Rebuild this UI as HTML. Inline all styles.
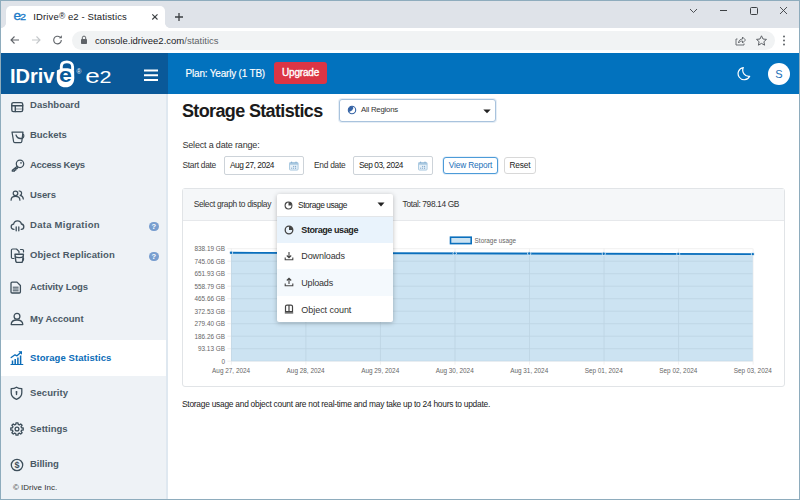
<!DOCTYPE html>
<html lang="en">
<head>
<meta charset="utf-8">
<title>IDrive e2 - Statistics</title>
<style>
*{box-sizing:border-box;margin:0;padding:0}
html,body{width:800px;height:500px;overflow:hidden;background:#fff}
body{font-family:"Liberation Sans",sans-serif;color:#222;position:relative;font-size:10px}
.abs{position:absolute}
#win{position:absolute;left:0;top:0;width:800px;height:500px;border:1px solid #8eacbd;overflow:hidden;background:#fff}
/* everything inside #inner is positioned in page coords */
#inner{position:absolute;left:-1px;top:-1px;width:800px;height:500px}
/* chrome */
#tabbar{left:0;top:0;width:800px;height:28px;background:#dfe3e9}
#tab{left:6px;top:6px;width:159px;height:22px;background:#fff;border-radius:5px 5px 0 0}
#tabtitle{left:33.300px;top:10.500px;font-size:9.5px;color:#202124;white-space:nowrap;letter-spacing:0.130px}
#toolbar{left:0;top:28px;width:800px;height:25px;background:#fff}
#omni{left:72px;top:31px;width:703px;height:18.500px;border-radius:9.500px;background:#f1f3f4}
#url{left:95px;top:35px;font-size:9.5px;color:#202124;white-space:nowrap}
#url span{color:#5f6368}
/* app header */
#hdrL{left:0;top:53px;width:168px;height:41px;background:#0a5999}
#hdrR{left:168px;top:53px;width:632px;height:41px;background:#0272be}
#plan{left:185.600px;top:67.500px;font-size:10px;color:#fff;white-space:nowrap;letter-spacing:-0.200px;-webkit-text-stroke:0.150px #fff}
#upg{left:273.700px;top:62.300px;width:53.700px;height:22.200px;border-radius:3px;background:#dc3545;color:#fff;font-size:10px;text-align:center;line-height:21.400px;letter-spacing:-0.200px;-webkit-text-stroke:0.350px #fff}
#avatar{left:767.800px;top:63px;width:22.200px;height:22.200px;border-radius:50%;background:#fff;color:#1a6fb8;text-align:center;line-height:22px;font-size:11px}
/* sidebar */
#side{left:0;top:94px;width:168px;height:406px;background:#eef2f6;border-right:2px solid #dfe8f0}
.nav{position:absolute;left:30px;font-size:9.5px;font-weight:bold;color:#4b5a66;white-space:nowrap}
.nav.act{color:#0a6cb8}
#actbg{left:0;top:340px;width:166px;height:36px;background:#fff}
.ico{position:absolute;left:10px;width:14px;height:14px}
.q{position:absolute;left:148.900px;width:9.800px;height:9.800px;border-radius:50%;background:#789ecf;color:#fff;font-size:7.500px;font-weight:bold;text-align:center;line-height:10px}
/* main */
#main{left:168px;top:94px;width:632px;height:406px;background:#fff}
#h1{left:182px;top:101px;font-size:18px;font-weight:bold;color:#1b1b1b;white-space:nowrap}
.box{position:absolute;background:#fff;border:1px solid #cdd3d9;border-radius:2px}
.t{position:absolute;white-space:nowrap}
</style>
</head>
<body>
<div id="win"><div id="inner">

<!-- Browser chrome -->
<div class="abs" id="tabbar"></div>
<div class="abs" id="tab"></div>
<div class="abs" style="left:1px;top:23px;width:5px;height:5px;background:radial-gradient(circle at 0 0,#dfe3e9 4.600px,#fff 5.200px)"></div>
<div class="abs" style="left:165px;top:23px;width:5px;height:5px;background:radial-gradient(circle at 100% 0,#dfe3e9 4.600px,#fff 5.200px)"></div>
<svg class="abs" style="left:13px;top:11px" width="16" height="11" viewBox="13 11 16 11" font-family="Liberation Sans, sans-serif" fill="#1a7ac8" stroke="#1a7ac8" stroke-width="0.300"><text transform="translate(13.400 19.500) scale(1.060 1)" font-size="12.800">e</text><text transform="translate(20.100 19.500) scale(1.100 1)" font-size="9.900">2</text></svg>
<div class="abs" id="tabtitle">IDrive<span style="font-size:8.500px;vertical-align:0.800px;letter-spacing:0">®</span> e2 - Statistics</div>
<svg class="abs" style="left:150.600px;top:13.100px" width="8" height="8" viewBox="0 0 8 8"><path d="M1.300 1.300 L6.500 6.500 M6.500 1.300 L1.300 6.500" stroke="#3c4043" stroke-width="1.1" fill="none"/></svg>
<svg class="abs" style="left:174.400px;top:12.100px" width="10" height="10" viewBox="0 0 10 10"><path d="M5 1 V9 M1 5 H9" stroke="#3c4043" stroke-width="1.3" fill="none"/></svg>
<!-- window controls -->
<svg class="abs" style="left:688px;top:5px" width="106" height="12" viewBox="0 0 106 12"><path d="M2 4 L5.5 7.5 L9 4" stroke="#3c4043" stroke-width="0.9" fill="none"/><path d="M32 5.5 H39" stroke="#3c4043" stroke-width="1"/><rect x="62.5" y="2.5" width="7" height="7" rx="1" fill="none" stroke="#3c4043" stroke-width="1"/><path d="M92 2 L99 9 M99 2 L92 9" stroke="#3c4043" stroke-width="0.9"/></svg>

<div class="abs" id="toolbar"></div>
<div class="abs" id="omni"></div>
<!-- nav icons -->
<svg class="abs" style="left:8px;top:33px" width="60" height="14" viewBox="0 0 60 14"><path d="M11 7 H3 M6.5 3.5 L3 7 L6.5 10.5" stroke="#5f6368" stroke-width="1.1" fill="none"/><path d="M24 7 H32 M28.500 3.500 L32 7 L28.500 10.500" stroke="#c4c7ca" stroke-width="1.1" fill="none"/><path d="M53.300 7 A3.800 3.800 0 1 1 52 4.200" stroke="#5f6368" stroke-width="1.1" fill="none"/><path d="M53.800 2.300 V5.300 H50.800 Z" fill="#5f6368"/></svg>
<svg class="abs" style="left:80px;top:35px" width="8" height="10" viewBox="0 0 8 10"><rect x="1" y="4" width="6" height="5" rx="0.8" fill="#5f6368"/><path d="M2.300 4 V2.800 A1.700 1.700 0 0 1 5.700 2.800 V4" stroke="#5f6368" stroke-width="1" fill="none"/></svg>
<div class="abs" id="url">console.idrivee2.com<span>/statitics</span></div>
<svg class="abs" style="left:734px;top:34px" width="40" height="13" viewBox="0 0 40 13"><path d="M3.500 5 H2 V11 H10 V9.500 M4.500 9 C4.500 6.500 6.500 5 8.500 5 V3 L11.500 6 L8.500 9 V7 C7 7 5.500 7.500 4.500 9 Z" stroke="#5f6368" stroke-width="0.9" fill="none" stroke-linejoin="round"/><path d="M27.500 1.800 L29 5 L32.500 5.400 L29.900 7.700 L30.600 11.200 L27.500 9.400 L24.400 11.200 L25.100 7.700 L22.500 5.400 L26 5 Z" stroke="#5f6368" stroke-width="1" fill="none" stroke-linejoin="round"/></svg>
<svg class="abs" style="left:782px;top:34px" width="4" height="13" viewBox="0 0 4 13"><circle cx="2" cy="2.500" r="1" fill="#5f6368"/><circle cx="2" cy="6.500" r="1" fill="#5f6368"/><circle cx="2" cy="10.500" r="1" fill="#5f6368"/></svg>

<!-- App header -->
<div class="abs" id="hdrL"></div>
<div class="abs" id="hdrR"></div>
<svg class="abs" style="left:0px;top:53px" width="130" height="41" viewBox="0 53 130 41" font-family="Liberation Sans, sans-serif">
<text x="10" y="82.700" font-size="20.200" font-weight="bold" fill="#fff" textLength="44.500" lengthAdjust="spacingAndGlyphs">IDriv</text>
<path d="M61.300 71 V66.800 C61.300 63.300 63.800 61.900 66.900 61.900 C70 61.900 72.600 63.500 72.600 66.800 V70.500" stroke="#fff" stroke-width="2.900" fill="none" stroke-linecap="butt"/>
<path d="M56.900 70.600 C59.500 68.900 62.500 68.300 65.500 68.300 C68.500 68.300 71.500 68.900 74.100 70.600 L74.300 78 C74.300 84 70.500 87.300 65.500 87.300 C60.400 87.300 56.700 84 56.700 78 Z" fill="#fff"/>
<text transform="translate(65.500 81.700) scale(1.180 1)" font-size="19.500" font-weight="bold" fill="#0a5999" text-anchor="middle">e</text>
<text x="79" y="73.900" font-size="6.600" fill="#fff" text-anchor="middle">®</text>
<text transform="translate(85.300 82.600) scale(1.260 1)" font-size="20.700" fill="#fff">e</text>
<text transform="translate(99.600 82.600) scale(1.330 1)" font-size="16.200" fill="#fff">2</text>
</svg>
<svg class="abs" style="left:144px;top:69px" width="14" height="13" viewBox="0 0 14 13"><path d="M0 1.600 H14 M0 6.250 H14 M0 10.900 H14" stroke="#fff" stroke-width="2"/></svg>
<div class="abs" id="plan">Plan: Yearly (1 TB)</div>
<div class="abs" id="upg">Upgrade</div>
<svg class="abs" style="left:737px;top:66px" width="14" height="15" viewBox="0 0 14 15"><path d="M6.300 1.600 A6.100 6.100 0 1 0 12.700 10.300 A6.200 6.200 0 0 1 6.300 1.600 Z" stroke="#fff" stroke-width="1.200" fill="none" stroke-linejoin="round"/></svg>
<div class="abs" id="avatar">S</div>

<!-- Sidebar -->
<div class="abs" id="side"></div>
<div class="abs" id="actbg"></div>
<div class="nav" style="top:98.6px;letter-spacing:0.019px">Dashboard</div>
<div class="nav" style="top:128.6px;letter-spacing:-0.024px">Buckets</div>
<div class="nav" style="top:158.5px;letter-spacing:-0.349px">Access Keys</div>
<div class="nav" style="top:188.5px;letter-spacing:-0.104px">Users</div>
<div class="nav" style="top:218.5px;letter-spacing:0.273px">Data Migration</div>
<div class="nav" style="top:248.5px;letter-spacing:0.077px">Object Replication</div>
<div class="nav" style="top:280.5px;letter-spacing:-0.135px">Activity Logs</div>
<div class="nav" style="top:313.3px;letter-spacing:0.012px">My Account</div>
<div class="nav act" style="top:351.8px;letter-spacing:0.064px">Storage Statistics</div>
<div class="nav" style="top:387.3px;letter-spacing:0.075px">Security</div>
<div class="nav" style="top:422.8px;letter-spacing:0.014px">Settings</div>
<div class="nav" style="top:458.4px;letter-spacing:-0.033px">Billing</div>
<div class="abs t" style="left:13px;top:482.800px;font-size:8px;color:#333">© IDrive Inc.</div>
<div class="q" style="top:221.600px">?</div>
<div class="q" style="top:251.700px">?</div>
<!--SIDEICONS-->
<svg class="abs" style="left:10px;top:101px" width="14" height="12" viewBox="0 0 14 12" fill="none" stroke="#3d4e5a" stroke-width="1.4" stroke-linecap="round" stroke-linejoin="round"><rect x="1.800" y="1.600" width="10.900" height="9" rx="1.600"/><path d="M1.800 4.700 H12.700 M5.300 4.700 V10.600" /><path d="M5.300 8 H12.700" stroke-width="0.600"/></svg>
<svg class="abs" style="left:11px;top:130px" width="14" height="14" viewBox="0 0 14 14" fill="none" stroke="#3d4e5a" stroke-width="1.25" stroke-linecap="round" stroke-linejoin="round"><path d="M1 2 H12 L10.800 11.500 C10.700 12.300 10.300 12.600 9.600 12.600 H3.800 C3.100 12.600 2.700 12.300 2.600 11.500 Z"/><path d="M5 5 C6 8 8 9 11.300 8.300 M11.700 4 C13.300 4.300 13.300 7.500 11.300 8.300"/></svg>
<svg class="abs" style="left:11px;top:159px" width="14" height="13" viewBox="0 0 14 13" fill="none" stroke="#3d4e5a" stroke-width="1.25" stroke-linecap="round" stroke-linejoin="round"><circle cx="9" cy="4.800" r="3.700"/><circle cx="10" cy="3.900" r="0.800" fill="#3d4e5a" stroke="none"/><path d="M6.300 7.300 L1.300 11.300 V12.200 H3.400 V11 H4.800 V9.700 H6 L7 8.300"/></svg>
<svg class="abs" style="left:10px;top:189px" width="15" height="13" viewBox="0 0 15 13" fill="none" stroke="#3d4e5a" stroke-width="1.25" stroke-linecap="round" stroke-linejoin="round"><circle cx="5.500" cy="4.300" r="2.300"/><path d="M1.100 11.200 C1.100 8.500 3 7.400 5.500 7.400 C8 7.400 9.900 8.500 9.900 11.200"/><path d="M9.200 2 C10.800 2.100 11.600 3.100 11.600 4.200 C11.600 5.200 11 6 10.200 6.400 C12 6.900 13.200 8 13.300 10"/></svg>
<svg class="abs" style="left:10px;top:219px" width="15" height="13" viewBox="0 0 15 13" fill="none" stroke="#3d4e5a" stroke-width="1.3" stroke-linecap="round" stroke-linejoin="round"><path d="M4 10.300 C2 10.300 1.200 9 1.200 7.700 C1.200 6.300 2.200 5.300 3.600 5.200 C4 3 5.600 1.800 7.500 1.800 C9.500 1.800 11 3 11.400 5 C13 5.200 13.800 6.300 13.800 7.700 C13.800 9.200 12.800 10.300 11.200 10.300"/><path d="M6.200 8 V11.800 M8.800 8 V11.800"/></svg>
<svg class="abs" style="left:10px;top:248px" width="15" height="15" viewBox="0 0 15 15" fill="none" stroke="#3d4e5a" stroke-width="1.2" stroke-linecap="round" stroke-linejoin="round"><path d="M4 10.500 H2.600 C1.800 10.500 1.400 10.100 1.400 9.300 V2.200 C1.400 1.400 1.800 1 2.600 1 H6.500 L9 3.500 V5"/><path d="M10.500 1.500 H12.500 C13.200 1.500 13.500 1.800 13.500 2.500 V4 M13.500 10 V11.500 C13.500 12.200 13.200 12.500 12.500 12.500"/><path d="M5 6.300 H13.400 L12.600 13.200 C12.500 14 12.100 14.400 11.300 14.400 H7.100 C6.300 14.400 5.900 14 5.800 13.200 Z" stroke-width="1.400"/><path d="M5.300 8.800 C7 10 11.400 10 13.100 8.800"/></svg>
<svg class="abs" style="left:10px;top:281px" width="12" height="13" viewBox="0 0 12 13" fill="none" stroke="#3d4e5a" stroke-width="1.3" stroke-linecap="round" stroke-linejoin="round"><path d="M1 2.200 C1 1.500 1.400 1.100 2.100 1.100 H7 L10.400 4.500 V10.900 C10.400 11.600 10 12 9.300 12 H2.100 C1.400 12 1 11.600 1 10.900 Z"/><path d="M3.200 6.200 H8.200 M3.200 8 H8.200 M3.200 9.800 H8.200" stroke-width="1"/></svg>
<svg class="abs" style="left:10px;top:312px" width="14" height="14" viewBox="0 0 14 14" fill="none" stroke="#3d4e5a" stroke-width="1.3" stroke-linecap="round" stroke-linejoin="round"><circle cx="7" cy="4.200" r="2.900"/><path d="M1.200 12.600 C1.200 9.500 3.500 8 7 8 C10.500 8 12.800 9.500 12.800 12.600 Z"/></svg>
<svg class="abs" style="left:10px;top:350px" width="14" height="16" viewBox="0 0 14 16" fill="none" stroke="#0a6cb8" stroke-width="1.25" stroke-linecap="round" stroke-linejoin="round"><path d="M1 14.500 H12.800" stroke-width="1.200"/><path d="M2.500 14 V10.500 M5.200 14 V9 M7.900 14 V7.500 M10.600 14 V5.500" stroke-width="1.500" stroke-linecap="butt"/><path d="M1.200 7.500 L5 4.800 L7 5.800 L11 2.200" stroke-width="1.300"/><path d="M8.300 1.200 H12 V4.800 Z" fill="#0a6cb8" stroke="none"/></svg>
<svg class="abs" style="left:10px;top:386px" width="14" height="15" viewBox="0 0 14 15" fill="none" stroke="#3d4e5a" stroke-width="1.3" stroke-linecap="round" stroke-linejoin="round"><path d="M6.500 1.200 C8 2.200 10 2.600 11.800 2.600 V6.800 C11.800 10 9.500 12.200 6.500 13.300 C3.500 12.200 1.200 10 1.200 6.800 V2.600 C3 2.600 5 2.200 6.500 1.200 Z"/><circle cx="6.500" cy="5.800" r="0.900" fill="#3d4e5a" stroke="none"/><path d="M6.500 6 V8.600" stroke-width="1.400"/></svg>
<svg class="abs" style="left:9.500px;top:421.900px" width="14" height="14" viewBox="0 0 14 14" fill="none" stroke="#3d4e5a" stroke-width="1.300" stroke-linecap="round" stroke-linejoin="round"><path d="M11.54 5.78 L13.22 6.01 L13.22 7.99 L11.54 8.22 L11.07 9.35 L12.10 10.70 L10.70 12.10 L9.35 11.07 L8.22 11.54 L7.99 13.22 L6.01 13.22 L5.78 11.54 L4.65 11.07 L3.30 12.10 L1.90 10.70 L2.93 9.35 L2.46 8.22 L0.78 7.99 L0.78 6.01 L2.46 5.78 L2.93 4.65 L1.90 3.30 L3.30 1.90 L4.65 2.93 L5.78 2.46 L6.01 0.78 L7.99 0.78 L8.22 2.46 L9.35 2.93 L10.70 1.90 L12.10 3.30 L11.07 4.65 Z"/><circle cx="7" cy="7" r="1.900"/></svg>
<svg class="abs" style="left:10px;top:457.5px" width="14" height="14" viewBox="0 0 14 14" fill="none" stroke="#3d4e5a" stroke-width="1.3" stroke-linecap="round" stroke-linejoin="round"><circle cx="7" cy="7" r="5.700"/><text x="7" y="10.200" font-family="Liberation Sans, sans-serif" font-size="9" font-weight="bold" text-anchor="middle" fill="#3d4e5a" stroke="none">$</text></svg>
<!--SIDEICONSEND-->

<!-- Main -->
<div class="abs" id="main"></div>
<div class="abs" id="h1" style="left:182px;letter-spacing:-0.642px">Storage Statistics</div>

<div class="box" style="left:339px;top:99px;width:157px;height:23px;border-color:#a9c3dd;border-radius:3px;box-shadow:0 0 0 1px #e6eef6"></div>
<svg class="abs" style="left:346.500px;top:105px" width="10" height="10" viewBox="0 0 10 10"><circle cx="5" cy="5" r="3.700" fill="none" stroke="#3563a5" stroke-width="1.100"/><path d="M5 1.300 C3 1.300 1.300 3 1.300 5 C1.300 5.800 1.600 6.500 2 7.100 L3.600 6.300 L5.200 5.200 L6.300 3.300 L5.800 1.400 Z" fill="#3563a5"/></svg>
<div class="t" style="left:361px;top:105px;font-size:7.800px;color:#333;letter-spacing:-0.222px">All Regions</div>
<svg class="abs" style="left:483.300px;top:108.500px" width="8" height="5" viewBox="0 0 8 5"><path d="M0.300 0.500 H7.700 L4 4.200 Z" fill="#222"/></svg>

<div class="t" style="left:182.4px;top:140px;font-size:9px;color:#333;letter-spacing:-0.173px">Select a date range:</div>
<div class="t" style="left:182.4px;top:160px;font-size:8.400px;color:#333;letter-spacing:-0.273px">Start date</div>
<div class="box" style="left:224px;top:156px;width:80px;height:19px"></div>
<div class="t" style="left:230px;top:160px;font-size:8.300px;color:#1a1a1a;letter-spacing:-0.448px">Aug 27, 2024</div>
<svg class="abs cal" style="left:289.4px;top:160.500px" width="10" height="10" viewBox="0 0 10 10"><rect x="0.500" y="1.500" width="8.600" height="7.600" rx="1" fill="#e6f0f8" stroke="#a6c6df" stroke-width="0.900"/><rect x="0.500" y="1.500" width="8.600" height="2.200" fill="#a6c6df"/><path d="M2.600 0.600 V2 M7 0.600 V2" stroke="#7fa9cc" stroke-width="0.900"/><path d="M4.200 5.400 H8 M2.200 7.200 H8" stroke="#6f9cc4" stroke-width="1" stroke-dasharray="1 0.900"/></svg>
<div class="t" style="left:314px;top:160px;font-size:8.400px;color:#333;letter-spacing:-0.254px">End date</div>
<div class="box" style="left:353px;top:156px;width:80px;height:19px"></div>
<div class="t" style="left:359px;top:160px;font-size:8.300px;color:#1a1a1a;letter-spacing:-0.448px">Sep 03, 2024</div>
<svg class="abs cal" style="left:418.4px;top:160.500px" width="10" height="10" viewBox="0 0 10 10"><rect x="0.500" y="1.500" width="8.600" height="7.600" rx="1" fill="#e6f0f8" stroke="#a6c6df" stroke-width="0.900"/><rect x="0.500" y="1.500" width="8.600" height="2.200" fill="#a6c6df"/><path d="M2.600 0.600 V2 M7 0.600 V2" stroke="#7fa9cc" stroke-width="0.900"/><path d="M4.200 5.400 H8 M2.200 7.200 H8" stroke="#6f9cc4" stroke-width="1" stroke-dasharray="1 0.900"/></svg>
<div class="box" style="left:443px;top:157px;width:55px;height:17px;border-color:#4d9bd8;border-radius:3px;box-shadow:0 0 0 0.600px #cfe3f5"></div>
<div class="t" style="left:443px;top:160.200px;width:55px;text-align:center;font-size:8.300px;color:#1a6fb8;letter-spacing:-0.150px">View Report</div>
<div class="box" style="left:504px;top:157px;width:32px;height:17px;border-color:#d8d8d8;border-radius:3px"></div>
<div class="t" style="left:504px;top:160.200px;width:32px;text-align:center;font-size:8.300px;color:#222;letter-spacing:-0.150px">Reset</div>

<!-- Panel -->
<div class="box" style="left:182px;top:188px;width:603px;height:199px;border-color:#e1e4e7;border-radius:3px"></div>
<div class="abs" style="left:183px;top:189px;width:601px;height:32.300px;background:#f5f7f9;border-bottom:1.300px solid #e6e8eb"></div>
<div class="t" style="left:193.7px;top:199px;font-size:8.400px;color:#333;letter-spacing:-0.323px">Select graph to display</div>
<div class="t" style="left:402.6px;top:199px;font-size:8.400px;color:#333;letter-spacing:-0.374px">Total: 798.14 GB</div>

<!-- Chart -->
<svg class="abs" style="left:182px;top:226px" width="603" height="160" viewBox="182 226 603 160" font-family="Liberation Sans, sans-serif">
<g stroke="#ececec" stroke-width="0.800">
<path d="M227.300 248.70 H752.8"/>
<path d="M227.300 261.20 H752.8"/>
<path d="M227.300 273.70 H752.8"/>
<path d="M227.300 286.20 H752.8"/>
<path d="M227.300 298.70 H752.8"/>
<path d="M227.300 311.20 H752.8"/>
<path d="M227.300 323.70 H752.8"/>
<path d="M227.300 336.20 H752.8"/>
<path d="M227.300 348.70 H752.8"/>
<path d="M227.300 361.20 H752.8"/>
<path d="M231.40 248.7 V364.7"/>
<path d="M305.93 248.7 V364.7"/>
<path d="M380.46 248.7 V364.7"/>
<path d="M454.99 248.7 V364.7"/>
<path d="M529.51 248.7 V364.7"/>
<path d="M604.04 248.7 V364.7"/>
<path d="M678.57 248.7 V364.7"/>
<path d="M753.10 248.7 V364.7"/>
</g>
<path d="M231.1 252.80 L752.8 254.10 V361.2 H231.1 Z" fill="#0071bc" fill-opacity="0.200"/>
<path d="M231.1 252.80 L752.8 254.10" stroke="#0a6fbd" stroke-width="1.900" fill="none"/>
<g fill="#dcebf6"><circle cx="231.1" cy="252.80" r="2"/><circle cx="305.6" cy="252.99" r="2"/><circle cx="380.2" cy="253.17" r="2"/><circle cx="454.7" cy="253.36" r="2"/><circle cx="529.2" cy="253.54" r="2"/><circle cx="603.7" cy="253.73" r="2"/><circle cx="678.3" cy="253.91" r="2"/><circle cx="752.8" cy="254.10" r="2"/></g><g fill="#0a6fbd"><circle cx="231.1" cy="252.80" r="1.200"/><circle cx="305.6" cy="252.99" r="1.200"/><circle cx="380.2" cy="253.17" r="1.200"/><circle cx="454.7" cy="253.36" r="1.200"/><circle cx="529.2" cy="253.54" r="1.200"/><circle cx="603.7" cy="253.73" r="1.200"/><circle cx="678.3" cy="253.91" r="1.200"/><circle cx="752.8" cy="254.10" r="1.200"/></g>
<rect x="450.500" y="237.200" width="20.700" height="6.400" fill="#cce3f2" stroke="#0a6fbd" stroke-width="1.600"/>
<text x="474.600" y="242.600" font-size="6.400" fill="#666">Storage usage</text>
<g font-size="6.400" fill="#666" text-anchor="end">
<text x="225" y="251.0">838.19 GB</text>
<text x="225" y="263.5">745.06 GB</text>
<text x="225" y="276.0">651.93 GB</text>
<text x="225" y="288.5">558.79 GB</text>
<text x="225" y="301.0">465.66 GB</text>
<text x="225" y="313.5">372.53 GB</text>
<text x="225" y="326.0">279.40 GB</text>
<text x="225" y="338.5">186.26 GB</text>
<text x="225" y="351.0">93.13 GB</text>
<text x="225" y="363.5">0</text>
</g>
<g font-size="6.400" fill="#666" text-anchor="middle">
<text x="231.1" y="373.200">Aug 27, 2024</text>
<text x="305.6" y="373.200">Aug 28, 2024</text>
<text x="380.2" y="373.200">Aug 29, 2024</text>
<text x="454.7" y="373.200">Aug 30, 2024</text>
<text x="529.2" y="373.200">Aug 31, 2024</text>
<text x="603.7" y="373.200">Sep 01, 2024</text>
<text x="678.3" y="373.200">Sep 02, 2024</text>
<text x="752.8" y="373.200">Sep 03, 2024</text>
</g>
</svg>

<!-- Dropdown -->
<div class="abs" style="left:276.700px;top:194px;width:116.500px;height:128px;background:#fff;border-radius:2px;box-shadow:0 1px 5px rgba(0,0,0,0.260)"></div>
<div class="abs" style="left:276.700px;top:216px;width:116.500px;height:1px;background:#e3e6e9"></div>
<div class="abs" style="left:276.700px;top:217px;width:116.500px;height:26px;background:#e9f3fc"></div>
<div class="abs" style="left:276.700px;top:269px;width:116.500px;height:27px;background:#f4f9fd"></div>
<svg class="abs" style="left:284px;top:201px" width="9" height="9" viewBox="0 0 10 10"><circle cx="5" cy="5" r="3.800" fill="none" stroke="#444" stroke-width="1.200"/><path d="M5 5 V1.200 A3.800 3.800 0 0 1 8.800 5 Z" fill="#444"/></svg>
<div class="t" style="left:298px;top:200px;font-size:8.400px;color:#222;letter-spacing:-0.422px">Storage usage</div>
<svg class="abs" style="left:377px;top:202px" width="8" height="5" viewBox="0 0 8 5"><path d="M0.500 0.500 H7.500 L4 4.500 Z" fill="#222"/></svg>

<svg class="abs" style="left:284px;top:225px" width="10" height="10" viewBox="0 0 10 10"><circle cx="5" cy="5" r="3.800" fill="none" stroke="#444" stroke-width="1.300"/><path d="M5 5 V1.200 A3.800 3.800 0 0 1 8.800 5 Z" fill="#444"/></svg>
<div class="t" style="left:301.3px;top:225px;font-size:9px;color:#222;font-weight:bold;letter-spacing:-0.410px">Storage usage</div>
<svg class="abs" style="left:284px;top:251px" width="10" height="10" viewBox="0 0 10 10"><path d="M5 1 V6.500 M2.800 4.500 L5 6.700 L7.200 4.500" stroke="#444" stroke-width="1.100" fill="none"/><path d="M1.200 6.500 V8.800 H8.800 V6.500" stroke="#444" stroke-width="1.100" fill="none"/></svg>
<div class="t" style="left:301.3px;top:251.2px;font-size:9px;color:#333;letter-spacing:-0.103px">Downloads</div>
<svg class="abs" style="left:284px;top:277px" width="10" height="10" viewBox="0 0 10 10"><path d="M5 7 V1.500 M2.800 3.500 L5 1.300 L7.200 3.500" stroke="#444" stroke-width="1.100" fill="none"/><path d="M1.200 6.500 V8.800 H8.800 V6.500" stroke="#444" stroke-width="1.100" fill="none"/></svg>
<div class="t" style="left:301.3px;top:278px;font-size:9px;color:#333;letter-spacing:-0.190px">Uploads</div>
<svg class="abs" style="left:284px;top:304px" width="10" height="10" viewBox="0 0 10 10"><path d="M1.500 2.500 C1.500 1.500 2 1.200 3 1.200 H7 C8 1.200 8.500 1.500 8.500 2.500 V7.500 H1.500 Z M5 1.200 V7.500 M0.800 8.800 H9.200" stroke="#444" stroke-width="1.200" fill="none"/></svg>
<div class="t" style="left:301.3px;top:304.6px;font-size:9px;color:#333;letter-spacing:-0.044px">Object count</div>

<div class="t" style="left:182px;top:399px;font-size:8.400px;color:#222;letter-spacing:-0.249px">Storage usage and object count are not real-time and may take up to 24 hours to update.</div>
<!--MAINEND-->

</div></div>
</body>
</html>
